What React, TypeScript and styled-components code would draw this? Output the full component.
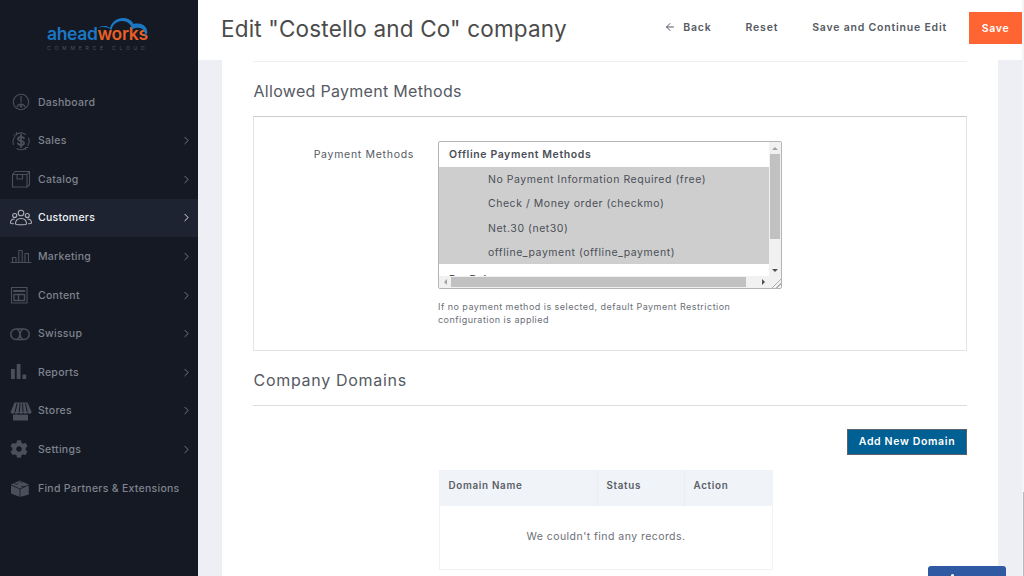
import React from "react";
import styled, { createGlobalStyle } from "styled-components";
import { FaCog } from "react-icons/fa";
import { FiChevronRight, FiArrowLeft } from "react-icons/fi";

const GlobalStyle = createGlobalStyle`
  html, body {
    margin: 0;
    height: 100%;
    overflow: hidden;
    background: #eeeff5;
  }
  #root { height: 100%; }
  * { box-sizing: border-box; }
`;

const Page = styled.div`
  position: relative;
  display: flex;
  width: 1024px;
  height: 576px;
  overflow: hidden;
  font-family: "Inter", "Liberation Sans", sans-serif;
  color: #555a63;
`;

const Sidebar = styled.aside`
  flex: 0 0 198px;
  background: #141923;
`;

const LogoBox = styled.div`
  height: 82.8px;
  padding: 14px 0 0 47px;
`;

const LogoMark = styled.div`
  position: relative;
  width: 104px;
  padding-top: 10px;
`;

const LogoCloud = styled.svg`
  position: absolute;
  left: 46px;
  top: 0;
`;

const LogoName = styled.div`
  display: flex;
  font-family: "Inter", sans-serif;
  font-size: 17.5px;
  line-height: 20px;
  font-weight: 600;
  letter-spacing: -0.35px;
`;

const LogoPart = styled.span<{ $color: string }>`
  color: ${(p) => p.$color};
`;

const LogoTag = styled.div`
  margin-top: 1px;
  font-size: 5px;
  line-height: 6px;
  letter-spacing: 3.8px;
  color: #4f535c;
  white-space: nowrap;
`;

const Nav = styled.nav`
  display: flex;
  flex-direction: column;
`;

const NavItem = styled.a<{ $active?: boolean }>`
  display: flex;
  align-items: center;
  height: 38.6px;
  padding: 0 5px 0 10px;
  background: ${(p) => (p.$active ? "#1d2331" : "transparent")};
  color: ${(p) => (p.$active ? "#f2f3f6" : "#7f838e")};
  font-size: 10.5px;
  font-weight: 500;
  letter-spacing: 0.27px;
`;

const NavIcon = styled.svg<{ $active?: boolean }>`
  flex: 0 0 22px;
  width: 22px;
  height: 22px;
  margin-right: 6px;
  color: ${(p) => (p.$active ? "#aeb1b9" : "#4a4f5c")};
`;

const NavGear = styled(FaCog)`
  flex: 0 0 18px;
  margin: 0 10px 0 0;
  color: #4a4f5c;
`;

const NavLabel = styled.span`
  flex: 1;
  white-space: nowrap;
`;

const NavChevron = styled(FiChevronRight)<{ $active?: boolean }>`
  stroke-width: 1.7;
  color: ${(p) => (p.$active ? "#eceded" : "#7a7e88")};
`;

const Main = styled.main`
  flex: 1;
  min-width: 0;
  display: flex;
  flex-direction: column;
`;

const Header = styled.header`
  flex: 0 0 60px;
  display: flex;
  align-items: flex-start;
  padding-left: 23px;
  background: #fff;
`;

const Title = styled.h1`
  margin: 14px auto 0 0;
  font-size: 22.5px;
  line-height: 30px;
  font-weight: 400;
  letter-spacing: 0.18px;
  color: #4b4b4b;
`;

const HeaderAction = styled.a<{ $gap: number }>`
  display: flex;
  align-items: center;
  gap: 7px;
  height: 32px;
  margin: 11px ${(p) => p.$gap}px 0 0;
  font-size: 10.5px;
  font-weight: 600;
  letter-spacing: 0.8px;
  color: #555a63;
`;

const SaveButton = styled.button`
  width: 53px;
  height: 32px;
  margin-top: 12px;
  border: 0;
  background: #ff6433;
  color: #fff;
  font: 600 10.5px "Inter", sans-serif;
  letter-spacing: 0.7px;
`;

const Body = styled.div`
  flex: 1;
  padding: 0 24px;
`;

const Panel = styled.div`
  height: 100%;
  padding: 1px 31px 0;
  background: #fff;
`;

const TopRule = styled.hr`
  margin: 0;
  border: 0;
  border-top: 1px solid #eeeeee;
`;

const SectionTitle = styled.h2`
  margin: 20px 0 15px;
  padding-left: 0.5px;
  font-size: 16px;
  line-height: 19px;
  font-weight: 400;
  letter-spacing: 0.3px;
  color: #555a63;
`;

const FieldBox = styled.div`
  display: flex;
  height: 235px;
  padding-top: 24px;
  border: 1px solid #e3e3e3;
  border-top-color: #cccccc;
`;

const FieldLabel = styled.label`
  flex: 0 0 160px;
  margin-right: 24px;
  padding-top: 7px;
  text-align: right;
  font-size: 10.5px;
  line-height: 14px;
  letter-spacing: 0.7px;
  color: #555a63;
`;

const FieldColumn = styled.div`
  width: 344px;
`;

const SelectBox = styled.div`
  display: grid;
  grid-template-columns: 330px 12px;
  grid-template-rows: 134px 12px;
  height: 148px;
  border: 1px solid #b4b4b4;
  border-radius: 2px;
  background: #fff;
  overflow: hidden;
`;

const OptionList = styled.div`
  overflow: hidden;
`;

const OptionGroup = styled.div`
  height: 25px;
  padding-left: 10px;
  font-size: 10.5px;
  line-height: 26px;
  font-weight: 600;
  letter-spacing: 0.6px;
  color: #4b4f57;
  white-space: nowrap;
`;

const SelectedOptions = styled.div`
  margin-bottom: 3px;
  background: #cecece;
`;

const Option = styled.div`
  height: 24.3px;
  padding-left: 49px;
  font-size: 10.5px;
  line-height: 26px;
  letter-spacing: 0.54px;
  color: #4b4f57;
  white-space: nowrap;
`;

const ScrollTrack = styled.div<{ $dir: "v" | "h" }>`
  display: flex;
  flex-direction: ${(p) => (p.$dir === "v" ? "column" : "row")};
  align-items: center;
  background: #f1f1f1;
`;

const ScrollArrow = styled.div<{ $dir: "up" | "down" | "left" | "right" }>`
  flex: 0 0 12px;
  display: flex;
  align-items: center;
  justify-content: center;
  &::after {
    content: "";
    border: 3px solid transparent;
    ${(p) =>
      p.$dir === "up"
        ? "border-bottom-color: #a3a3a3; border-top-width: 0;"
        : p.$dir === "down"
          ? "border-top-color: #505050; border-bottom-width: 0;"
          : p.$dir === "left"
            ? "border-right-color: #a3a3a3; border-left-width: 0;"
            : "border-left-color: #505050; border-right-width: 0;"}
  }
`;

const VerticalThumb = styled.div`
  width: 10px;
  height: 85px;
  background: #c1c1c1;
`;

const ScrollRest = styled.div`
  flex: 1;
`;

const HorizontalThumb = styled.div`
  height: 10px;
  width: 295px;
  background: #c1c1c1;
`;

const Resizer = styled.div`
  background:
    linear-gradient(135deg, transparent 60%, #b0b0b0 60%, #b0b0b0 66%, transparent 66%, transparent 78%, #b0b0b0 78%, #b0b0b0 84%, transparent 84%),
    #f1f1f1;
`;

const Hint = styled.p`
  margin: 11px 0 0;
  width: 320px;
  font-size: 9px;
  line-height: 13px;
  letter-spacing: 0.47px;
  color: #6b6f77;
`;

const DomainTitle = styled(SectionTitle)`
  margin: 20px 0 15px;
  letter-spacing: 0.7px;
`;

const Rule = styled.hr`
  margin: 0;
  border: 0;
  border-top: 1px solid #dddddd;
`;

const ButtonRow = styled.div`
  display: flex;
  justify-content: flex-end;
  margin: 23px 0 15px;
`;

const AddButton = styled.button`
  width: 120px;
  height: 26px;
  padding: 0 0 2px;
  border: 1px solid #59636b;
  background: #006094;
  color: #fff;
  font: 600 10.5px "Inter", sans-serif;
  letter-spacing: 0.65px;
`;

const DomainTable = styled.div`
  width: 334px;
  margin-left: 186px;
  border: 1px solid #eff2f7;
`;

const TableHead = styled.div`
  display: grid;
  grid-template-columns: 158px 87px 1fr;
  height: 35px;
  background: #f0f3f8;
`;

const HeadCell = styled.div`
  padding-left: 8.5px;
  border-right: 1px solid #e9edf3;
  font-size: 9.8px;
  line-height: 30px;
  font-weight: 600;
  letter-spacing: 0.7px;
  color: #5a5e66;
  &:last-child { border-right: 0; }
`;

const EmptyRow = styled.div`
  height: 63px;
  text-align: center;
  font-size: 10.5px;
  line-height: 62px;
  letter-spacing: 0.45px;
  color: #6b6f77;
`;

const FloatingButton = styled.div`
  position: absolute;
  left: 928px;
  top: 566px;
  width: 78px;
  height: 30px;
  border-radius: 3px;
  background: #2f5aa3;
  &::after {
    content: "";
    position: absolute;
    left: 23px;
    top: 8px;
    width: 3px;
    height: 3px;
    border-radius: 50%;
    background: #fff;
  }
`;

const PageScroll = styled.div`
  flex: 0 0 2px;
  padding-top: 492px;
  background: #f4f4f6;
`;

const PageThumb = styled.div`
  height: 84px;
  margin-left: 1px;
  background: #b9b9bd;
`;

const stroke = {
  fill: "none",
  stroke: "currentColor",
  strokeWidth: 1.1,
  strokeLinecap: "round" as const,
  strokeLinejoin: "round" as const,
};

const iconShapes: Record<string, React.ReactNode> = {
  dashboard: (
    <g {...stroke}>
      <circle cx="11" cy="11" r="7.7" />
      <path d="M11 5.500V11" />
      <path d="M7 15.800a4.300 4.300 0 0 1 8 0" />
      <circle cx="11" cy="15" r="1" />
    </g>
  ),
  sales: (
    <g {...stroke}>
      <path d="M3.500 14.500A8 8 0 0 1 5 6.500M7 4A8 8 0 0 1 15.500 4.500M18.500 8a8 8 0 0 1-.7 7.500M15 18.500a8 8 0 0 1-8 .2" />
      <path d="M6.500 2.500v2.500H4M15.500 19.500v-2h2.500" />
      <path strokeWidth="1.8" d="M14 8.300c-.5-1-1.600-1.400-3-1.400-1.700 0-3 .8-3 2 0 2.800 6 1.400 6 4.100 0 1.200-1.300 2-3 2-1.500 0-2.700-.6-3.100-1.600M11 5v12" />
    </g>
  ),
  catalog: (
    <g {...stroke}>
      <path d="M2.500 6.500 5 3.500h14.500v13l-2.500 2.500H2.500z" />
      <path d="M2.500 6.500H17V19M17 6.500l2.500-3" />
      <path d="M7 6.500v4.500h5.500V6.500" />
    </g>
  ),
  customers: (
    <g {...stroke}>
      <circle cx="11" cy="6" r="2.800" />
      <circle cx="4.700" cy="8.500" r="2" />
      <circle cx="17.300" cy="8.500" r="2" />
      <path d="M5.500 17c0-3.500 2.400-5.500 5.500-5.500s5.500 2 5.500 5.500c0 .6-1.500.8-5.500.8s-5.500-.2-5.500-.8z" />
      <path d="M4.300 12C2 12.200.5 13.700.5 16c0 .5.900.7 3 .8M17.700 12c2.300.2 3.800 1.700 3.800 4 0 .5-.9.7-3 .8" />
    </g>
  ),
  marketing: (
    <g {...stroke}>
      <path d="M1 17.500h20" />
      <path d="M2.500 17.500v-5h3.500v5M8.800 17.500V5.500h3.400v12M15 17.500v-9h3.500v9" />
    </g>
  ),
  content: (
    <g {...stroke}>
      <rect x="1.500" y="3.500" width="15.500" height="15.500" />
      <path strokeWidth="2" d="M4 7h10.500" />
      <path strokeWidth="1.400" d="M4 10.500h10.500v6H4zM8.500 10.500v6" />
    </g>
  ),
  swissup: (
    <g {...stroke} strokeWidth={1.5}>
      <rect x="0.800" y="6" width="18.400" height="10.500" rx="5.200" />
      <path d="M7.500 6.500c1.500 1 2.500 3 2.500 4.700s-1 3.700-2.500 4.800M12.500 6.500c-1.500 1-2.500 3-2.500 4.700s1 3.700 2.500 4.800" />
    </g>
  ),
  reports: (
    <g fill="currentColor">
      <rect x="1" y="8" width="3.800" height="10" />
      <rect x="6.700" y="3" width="3.800" height="15" />
      <rect x="12.500" y="13.500" width="3.700" height="4.500" />
    </g>
  ),
  stores: (
    <g fill="currentColor">
      <path d="M4.500 2.500h13L21.700 12c-.3 1.200-1 1.800-2 1.800-.9 0-1.600-.4-2-1.100-.5.700-1.200 1.100-2.200 1.100s-1.800-.4-2.200-1.100c-.5.700-1.300 1.100-2.200 1.100s-1.700-.4-2.200-1.100c-.5.700-1.200 1.100-2.200 1.100s-1.700-.4-2.200-1.100c-.4.700-1 1.100-1.900 1.100-1 0-1.700-.6-2-1.800z" />
      <path d="M3 14.500c1 .4 2.200.3 3-.2.900.6 2.200.6 3 .1.800.5 2.200.5 3.200 0 .8.500 2.100.5 3 0 .9.500 2 .6 2.800.1v6H3z" />
      <path stroke="#141923" strokeWidth="1" d="M7 3.500 5.200 12M10 3.500 9.300 12M12.500 3.500l.5 8.500M15.500 3.500l1.700 8.500" />
    </g>
  ),
  lego: (
    <g>
      <path fill="currentColor" d="M1 7.500 10 3.500l8.800 4v10L10 20l-9-3.500z" />
      <path fill="none" stroke="#141923" strokeWidth="0.8" d="M1 8 10 12l8.800-4M10 12v8M4.500 6.500c1 1 3 1 4 0M9.500 4.500c1 1 3 1 4 0M11 9c1 1 3 1 4 0" />
    </g>
  ),
};

type NavEntry = { key: string; label: string; arrow?: boolean; active?: boolean };

const navEntries: NavEntry[] = [
  { key: "dashboard", label: "Dashboard" },
  { key: "sales", label: "Sales", arrow: true },
  { key: "catalog", label: "Catalog", arrow: true },
  { key: "customers", label: "Customers", arrow: true, active: true },
  { key: "marketing", label: "Marketing", arrow: true },
  { key: "content", label: "Content", arrow: true },
  { key: "swissup", label: "Swissup", arrow: true },
  { key: "reports", label: "Reports", arrow: true },
  { key: "stores", label: "Stores", arrow: true },
  { key: "settings", label: "Settings", arrow: true },
  { key: "lego", label: "Find Partners & Extensions" },
];

const paymentOptions = [
  "No Payment Information Required (free)",
  "Check / Money order (checkmo)",
  "Net.30 (net30)",
  "offline_payment (offline_payment)",
];

export default function App() {
  return (
    <Page>
      <GlobalStyle />
      <Sidebar>
        <LogoBox>
          <LogoMark>
            <LogoCloud width="58" height="26" viewBox="0 0 58 26">
              <path
                d="M5 14c3-2.500 9-3 12 0 1.500-6 7-10 13-10 5 0 9 2.500 10.500 6 6-1.500 11 .5 13 4.500 1.300 2.800.6 6.500-1.500 8.500 1-4-1-8-5-9-3-.7-6 0-8 1.500C38.500 10 34 7 29 7c-5 0-9.500 3.500-10.500 9-3-3-9-4-13.500-2z"
                fill="#1c77c3"
              />
            </LogoCloud>
            <LogoName>
              <LogoPart $color="#1c77c3">ahead</LogoPart>
              <LogoPart $color="#ea5f25">works</LogoPart>
            </LogoName>
            <LogoTag>COMMERCE CLOUD</LogoTag>
          </LogoMark>
        </LogoBox>
        <Nav>
          {navEntries.map((entry) => (
            <NavItem key={entry.key} $active={entry.active}>
              {entry.key === "settings" ? (
                <NavGear size={18} />
              ) : (
                <NavIcon viewBox="0 0 22 22" $active={entry.active}>
                  {iconShapes[entry.key]}
                </NavIcon>
              )}
              <NavLabel>{entry.label}</NavLabel>
              {entry.arrow && <NavChevron size={13} $active={entry.active} />}
            </NavItem>
          ))}
        </Nav>
      </Sidebar>
      <Main>
        <Header>
          <Title>Edit "Costello and Co" company</Title>
          <HeaderAction $gap={34}>
            <FiArrowLeft size={12} />
            Back
          </HeaderAction>
          <HeaderAction $gap={34}>Reset</HeaderAction>
          <HeaderAction $gap={22}>Save and Continue Edit</HeaderAction>
          <SaveButton>Save</SaveButton>
        </Header>
        <Body>
          <Panel>
            <TopRule />
            <SectionTitle>Allowed Payment Methods</SectionTitle>
            <FieldBox>
              <FieldLabel>Payment Methods</FieldLabel>
              <FieldColumn>
                <SelectBox>
                  <OptionList>
                    <OptionGroup>Offline Payment Methods</OptionGroup>
                    <SelectedOptions>
                      {paymentOptions.map((option) => (
                        <Option key={option}>{option}</Option>
                      ))}
                    </SelectedOptions>
                    <OptionGroup>PayPal</OptionGroup>
                  </OptionList>
                  <ScrollTrack $dir="v">
                    <ScrollArrow $dir="up" />
                    <VerticalThumb />
                    <ScrollRest />
                    <ScrollArrow $dir="down" />
                  </ScrollTrack>
                  <ScrollTrack $dir="h">
                    <ScrollArrow $dir="left" />
                    <HorizontalThumb />
                    <ScrollRest />
                    <ScrollArrow $dir="right" />
                  </ScrollTrack>
                  <Resizer />
                </SelectBox>
                <Hint>
                  If no payment method is selected, default Payment Restriction
                  configuration is applied
                </Hint>
              </FieldColumn>
            </FieldBox>
            <DomainTitle>Company Domains</DomainTitle>
            <Rule />
            <ButtonRow>
              <AddButton>Add New Domain</AddButton>
            </ButtonRow>
            <DomainTable>
              <TableHead>
                <HeadCell>Domain Name</HeadCell>
                <HeadCell>Status</HeadCell>
                <HeadCell>Action</HeadCell>
              </TableHead>
              <EmptyRow>We couldn't find any records.</EmptyRow>
            </DomainTable>
          </Panel>
        </Body>
      </Main>
      <PageScroll>
        <PageThumb />
      </PageScroll>
      <FloatingButton />
    </Page>
  );
}
